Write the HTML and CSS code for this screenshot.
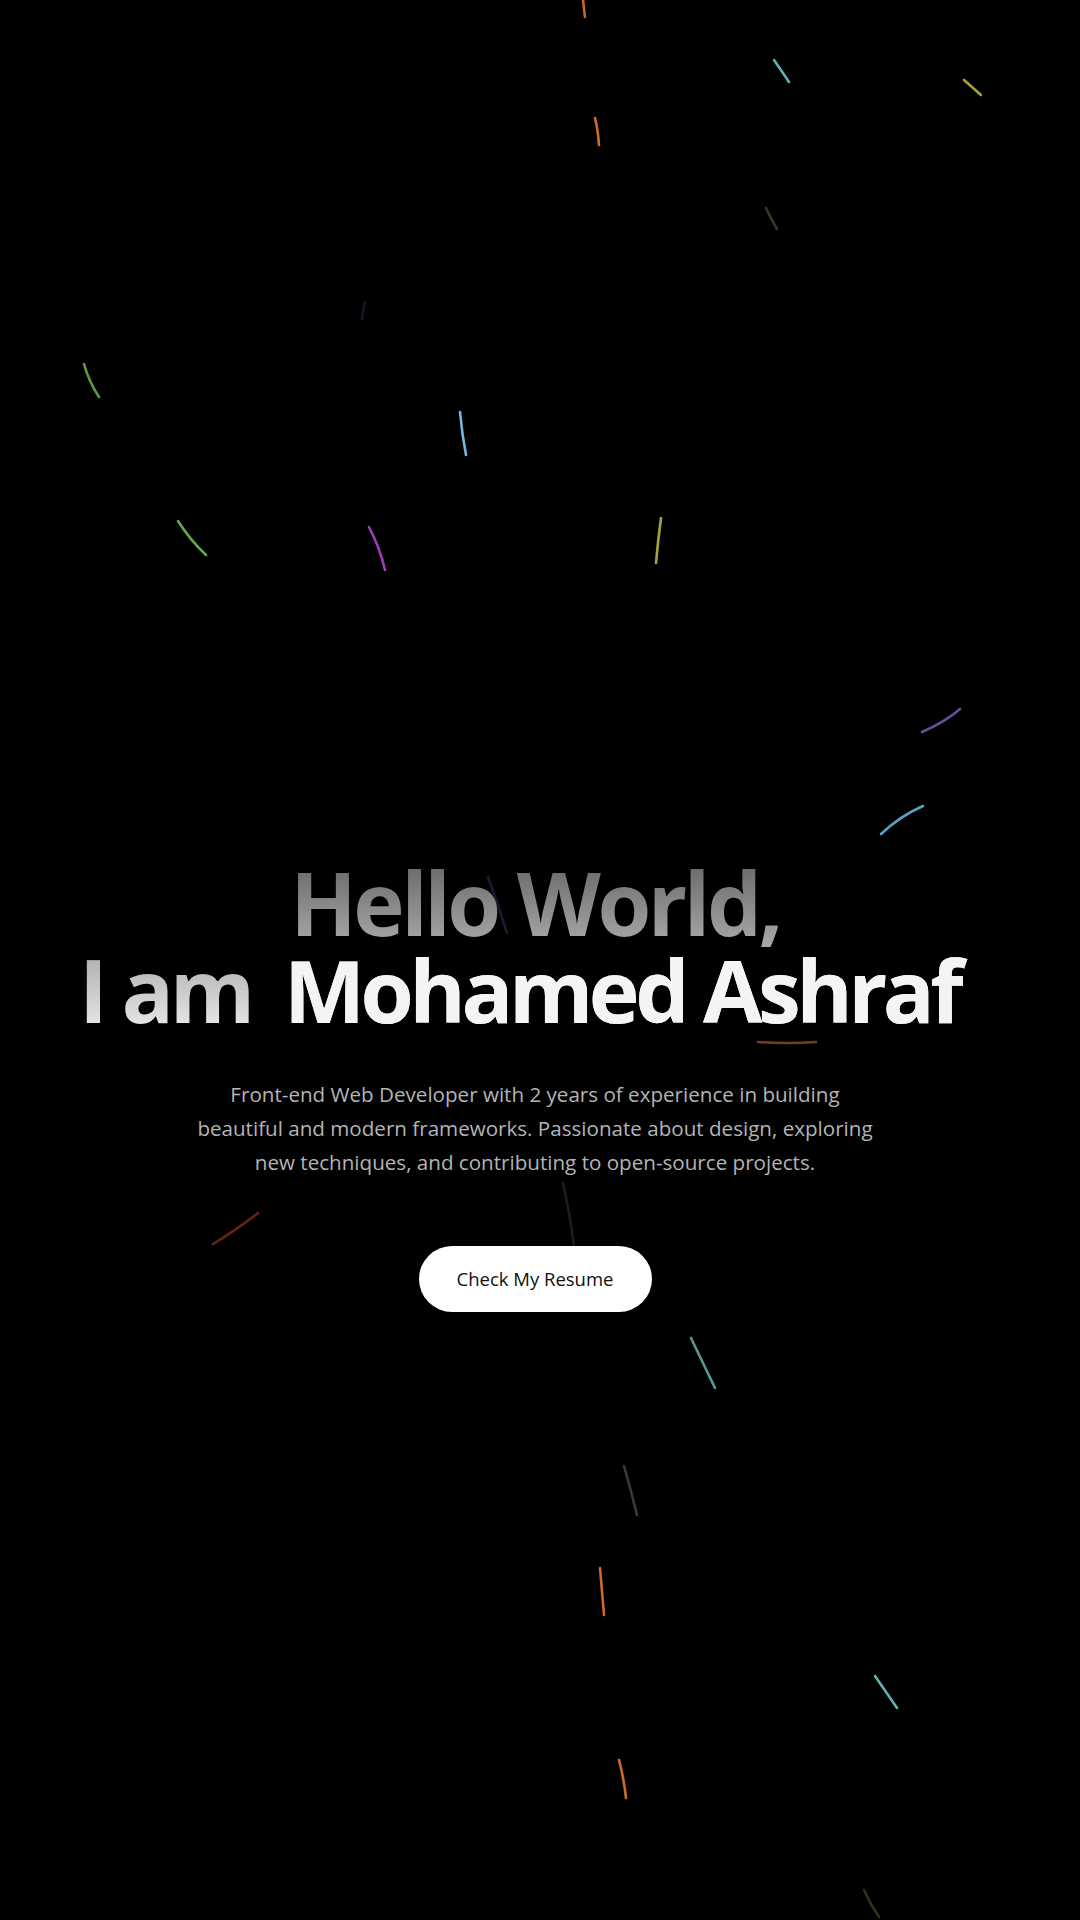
FILE: index.html
```html
<!DOCTYPE html>
<html lang="en">
<head>
<meta charset="utf-8">
<title>Mohamed Ashraf</title>
<link rel="stylesheet" href="styles.css">
</head>
<body>
<main class="hero">
  <svg class="rain" width="1080" height="1920" viewBox="0 0 1080 1920" aria-hidden="true">
    <g fill="none" stroke-width="2.6" stroke-linecap="round">
      <path d="M583 0 Q584 9 585 17" stroke="#c8662a"/>
      <path d="M774 60 Q781 70 789 82" stroke="#5fb3b5"/>
      <path d="M964 80 Q972 87 981 95" stroke="#a9a032"/>
      <path d="M595 118 Q598 130 599 145" stroke="#cf6a2a"/>
      <path d="M766 208 Q771 219 777 229" stroke="#353a1a"/>
      <path d="M365 302 Q363 311 362 319" stroke="#1f1024"/>
      <path d="M84 364 Q89 382 99 397" stroke="#5e9a45"/>
      <path d="M460 412 Q462 434 466 455" stroke="#79b6e2"/>
      <path d="M178 521 Q190 540 206 555" stroke="#64a84a"/>
      <path d="M369 527 Q380 548 385 570" stroke="#9b3fb6"/>
      <path d="M661 518 Q658 540 656 563" stroke="#a7a338"/>
      <path d="M960 709 Q945 722 922 732" stroke="#6a4d9c"/>
      <path d="M923 806 Q900 816 881 834" stroke="#5aa3c8"/>
      <path d="M488 877 Q498 905 507 933" stroke="#1a1a32"/>
      <path d="M758 1042 Q787 1044 816 1042" stroke="#7a3b17"/>
      <path d="M258 1213 Q233 1232 213 1244" stroke="#6a2216"/>
      <path d="M563 1183 Q570 1214 574 1245" stroke="#1c1c1c"/>
      <path d="M691 1338 Q703 1363 715 1388" stroke="#4f9a9a"/>
      <path d="M624 1466 Q631 1490 637 1515" stroke="#3a3a3a"/>
      <path d="M600 1568 Q602 1592 604 1615" stroke="#cd6a2a"/>
      <path d="M875 1676 Q886 1692 897 1708" stroke="#5fb3b5"/>
      <path d="M619 1760 Q624 1779 626 1798" stroke="#cf6a2a"/>
      <path d="M864 1890 Q870 1904 879 1917" stroke="#30331a"/>
    </g>
  </svg>

  <section class="intro">
    <h1 class="title"><span class="greet">Hello World,</span><br><span class="iam">I am</span> <span class="name">Mohamed Ashraf</span><span class="cursor"></span></h1>
    <p class="lead">Front-end Web Developer with 2 years of experience in building beautiful and modern frameworks. Passionate about design, exploring new techniques, and contributing to open-source projects.</p>
    <a class="btn" href="#">Check My Resume</a>
  </section>
</main>
</body>
</html>
```

FILE: styles.css
```css
* {
  box-sizing: border-box;
}

html,
body {
  margin: 0;
  padding: 0;
  background: #000;
}

body {
  font-family: "Open Sans", "Noto Sans", "Liberation Sans", sans-serif;
  color: #fff;
}

.hero {
  position: relative;
  width: 1080px;
  height: 1920px;
  overflow: hidden;
  background: #000;
}

.rain {
  position: absolute;
  left: 0;
  top: 0;
  z-index: 0;
}

.intro {
  position: relative;
  z-index: 1;
  height: 100%;
  display: flex;
  flex-direction: column;
  align-items: center;
  justify-content: center;
  padding: 250px 10px 0 0;
}

.title {
  margin: 0;
  font-size: 87px;
  line-height: 87px;
  font-weight: 700;
  letter-spacing: -0.04em;
  text-align: center;
  white-space: nowrap;
  background: linear-gradient(180deg, #666 0%, #ebebeb 100%);
  -webkit-background-clip: text;
  background-clip: text;
  color: transparent;
  -webkit-text-fill-color: transparent;
}

.iam {
  letter-spacing: -0.05em;
}

.name {
  margin-left: 14px;
  font-size: 86px;
  letter-spacing: -0.052em;
  -webkit-text-fill-color: #f4f4f4;
  color: #f4f4f4;
}

.cursor {
  display: inline-block;
  width: 32px;
  height: 70px;
}

.lead {
  margin: 44px 0 0;
  max-width: 690px;
  font-size: 20.6px;
  line-height: 34px;
  font-weight: 400;
  color: #b4b4b4;
  text-align: center;
}

.btn {
  margin-top: 67px;
  display: inline-flex;
  align-items: center;
  justify-content: center;
  width: 233px;
  height: 66px;
  border-radius: 33px;
  background: #fff;
  color: #111;
  font-size: 18.5px;
  text-decoration: none;
}
```
